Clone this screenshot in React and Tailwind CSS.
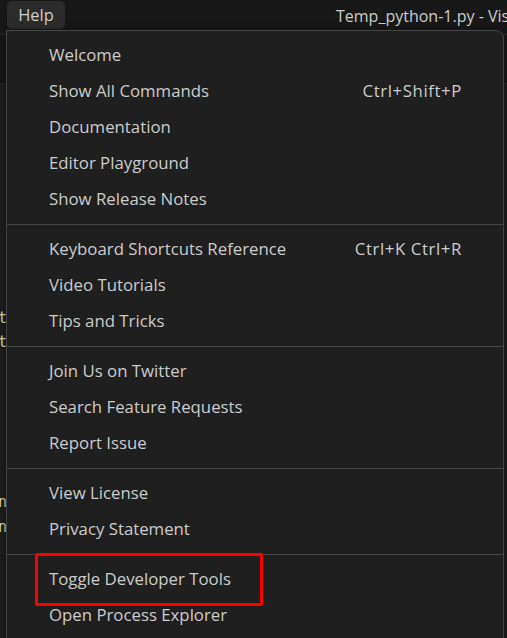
import React from "react";

const groups = [
  [
    ["Welcome", ""],
    ["Show All Commands", "Ctrl+Shift+P"],
    ["Documentation", ""],
    ["Editor Playground", ""],
    ["Show Release Notes", ""],
  ],
  [
    ["Keyboard Shortcuts Reference", "Ctrl+K Ctrl+R"],
    ["Video Tutorials", ""],
    ["Tips and Tricks", ""],
  ],
  [
    ["Join Us on Twitter", ""],
    ["Search Feature Requests", ""],
    ["Report Issue", ""],
  ],
  [
    ["View License", ""],
    ["Privacy Statement", ""],
  ],
  [
    ["Toggle Developer Tools", "", true],
    ["Open Process Explorer", ""],
  ],
];

function Item({ label, keys, boxed }) {
  return (
    <div className="relative flex h-[36px] items-center justify-between pl-[42px] pr-[41px]">
      <span>{label}</span>
      {keys ? <span className="tracking-[0.6px]">{keys}</span> : null}
      {boxed ? (
        <div className="absolute left-[28px] top-[-8px] h-[53px] w-[228px] rounded-[2px] border-[3px] border-[#ff0000]" />
      ) : null}
    </div>
  );
}

export default function App() {
  return (
    <div
      className="relative h-[638px] w-[507px] overflow-hidden bg-[#1f1f1f] text-[#cccccc]"
      style={{ fontFamily: '"Open Sans", "Noto Sans", sans-serif' }}
    >
      {/* title bar */}
      <div className="flex h-[35px] items-start overflow-hidden border-b border-[#2b2b2b] bg-[#181818]">
        <div className="ml-[7px] mt-[1px] flex h-[28px] w-[58px] shrink-0 items-center justify-center rounded-[5px] bg-[#2b2b2b] text-[16.5px]">
          Help
        </div>
        <div className="ml-[271px] mt-[4px] shrink-0 whitespace-nowrap text-[16px]">Temp_python-1.py - Visual Studio Code</div>
      </div>
      {/* tab strip */}
      <div className="h-[49px] border-b border-[#2b2b2b] bg-[#181818]" />
      {/* editor remnants */}
      <div className="relative" style={{ fontFamily: '"DejaVu Sans Mono", monospace' }}>
        <div className="absolute left-0 top-[222px] w-[7px] overflow-hidden text-[15px] leading-[24px] text-[#dcdcaa]">
          <div className="flex justify-end">t</div>
          <div className="flex justify-end">t</div>
        </div>
        <div className="absolute left-0 top-[406px] w-[7px] overflow-hidden text-[15px] leading-[25px] text-[#dcdcaa]">
          <div className="flex justify-end">n</div>
          <div className="flex justify-end">n</div>
        </div>
      </div>

      {/* menu */}
      <div className="absolute left-[6px] top-[30px] w-[498px] rounded-tr-[8px] border border-[#454545] bg-[#1f1f1f] pt-[6px] text-[16.8px] shadow-[0_2px_8px_rgba(0,0,0,0.5)]">
        {groups.map((g, gi) => (
          <div key={gi}>
            {gi > 0 ? (
              <div className="flex h-[14px] items-center">
                <div className="h-px w-full bg-[#454545]" />
              </div>
            ) : null}
            {g.map(([l, k, b]) => (
              <Item key={l} label={l} keys={k} boxed={b} />
            ))}
          </div>
        ))}
        <div className="h-[20px]" />
      </div>
    </div>
  );
}
